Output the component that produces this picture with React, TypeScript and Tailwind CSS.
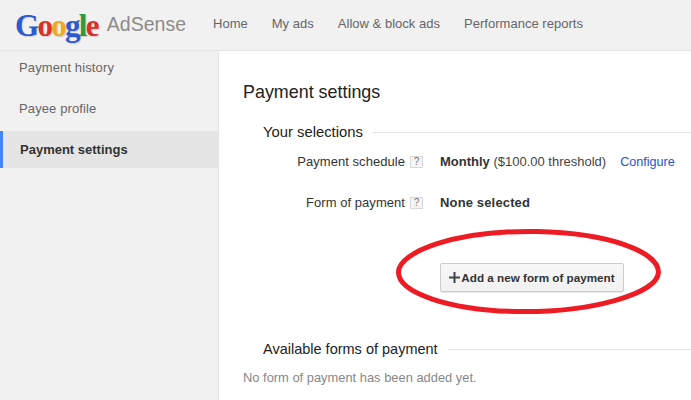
const navLinks = ['Home', 'My ads', 'Allow & block ads', 'Performance reports']

function HelpBox() {
  return (
    <span className="flex h-[12px] w-[13px] items-center justify-center border border-[#d9d9d9] bg-[#f5f5f5] text-[10px] leading-none text-[#777]">
      ?
    </span>
  )
}

function SectionTitle({ title, size }: { title: string; size: string }) {
  return (
    <div className="flex h-[20px] items-center gap-[10px] pl-[20px]">
      <h3 className={`whitespace-nowrap leading-[20px] text-[#222] ${size}`}>{title}</h3>
      <div className="h-px flex-1 bg-[#e5e5e5]" />
    </div>
  )
}

export default function App() {
  return (
    <div className="relative flex h-[400px] w-[691px] flex-col overflow-hidden bg-white font-['Liberation_Sans',sans-serif] text-[13px] leading-[20px] text-[#333]">
      {/* Header */}
      <header className="flex h-[51px] shrink-0 items-center border-b border-[#e5e5e5] bg-[#f1f1f1]">
        <div className="flex w-[213px] items-center pl-[15px]">
          <span className="font-['Liberation_Serif',serif] text-[31px] font-bold leading-none tracking-[-1.7px] [text-shadow:1px_1px_1px_rgba(0,0,0,0.15)]">
            <span className="text-[#2a5bd0]">G</span>
            <span className="text-[#d9302a]">o</span>
            <span className="text-[#eea91d]">o</span>
            <span className="text-[#2a5bd0]">g</span>
            <span className="text-[#2d9a3e]">l</span>
            <span className="text-[#d9302a]">e</span>
          </span>
          <span className="ml-[9px] text-[19.5px] leading-none text-[#8c8c8c]">AdSense</span>
        </div>
        <nav className="flex gap-[24px] pb-[2px] tracking-[0.02px] text-[#666]">
          {navLinks.map((link) => (
            <a key={link} className="whitespace-nowrap">
              {link}
            </a>
          ))}
        </nav>
      </header>

      <div className="flex flex-1">
        {/* Sidebar */}
        <aside className="w-[219px] shrink-0 border-r border-[#e5e5e5] bg-[#f1f1f1]">
          <div className="flex h-[34px] items-center pl-[19px] tracking-[0.12px] text-[#666]">Payment history</div>
          <div className="mt-[7px] flex h-[34px] items-center pl-[19px] tracking-[0.12px] text-[#666]">Payee profile</div>
          <div className="mt-[5px] flex h-[37px] items-center border-l-[3px] border-[#4285f4] bg-[#e5e5e5] pl-[17px] font-bold text-[#333]">
            Payment settings
          </div>
        </aside>

        {/* Main content */}
        <main className="flex-1 pl-[24px] pt-[31px]">
          <h2 className="text-[17.9px] leading-[20px] text-[#222]">Payment settings</h2>

          <div className="mt-[20px]">
            <SectionTitle title="Your selections" size="text-[14.8px]" />
          </div>

          <div className="mt-[10px] flex h-[20px] items-center">
            <div className="flex w-[180px] items-center justify-end gap-[5px]">
              <span className="whitespace-nowrap tracking-[0.05px]">Payment schedule</span>
              <HelpBox />
            </div>
            <div className="ml-[17px] whitespace-nowrap text-[#444]">
              <b className="text-[#333]">Monthly</b> ($100.00 threshold)
            </div>
            <a className="ml-[14px] whitespace-nowrap text-[12.6px] text-[#2255cc]">Configure</a>
          </div>

          <div className="mt-[21px] flex h-[20px] items-center">
            <div className="flex w-[180px] items-center justify-end gap-[5px]">
              <span className="whitespace-nowrap tracking-[0.05px]">Form of payment</span>
              <HelpBox />
            </div>
            <b className="ml-[17px] whitespace-nowrap tracking-[0.15px] text-[#333]">None selected</b>
          </div>

          <button className="ml-[197px] mt-[50px] flex h-[29px] w-[184px] items-center justify-center rounded-[2px] border border-[#ccc] bg-gradient-to-b from-[#f8f8f8] to-[#f1f1f1] text-[11.7px] font-bold text-[#333] shadow-[0_1px_1px_rgba(0,0,0,0.1)]">
            <svg width="11" height="11" viewBox="0 0 11 11" className="mr-px">
              <path d="M4.5 0h2v4.5H11v2H6.5V11h-2V6.5H0v-2h4.5z" fill="#444" />
            </svg>
            Add a new form of payment
          </button>

          <div className="mt-[47px]">
            <SectionTitle title="Available forms of payment" size="text-[14.5px]" />
          </div>
          <p className="mt-[11px] text-[12.9px] leading-[16px] text-[#888]">No form of payment has been added yet.</p>
        </main>
      </div>

      {/* Red hand-drawn ellipse over the button */}
      <svg width="691" height="400" className="pointer-events-none absolute left-0 top-0">
        <path
          d="M398.5 272 C399 252 455 230 537 231.5 C610 233 658 252 658.5 272 C658 294 590 313 515 311.5 C450 310 398 293 398.5 272 Z"
          fill="none"
          stroke="#ed1c24"
          strokeWidth="5"
        />
      </svg>
    </div>
  )
}
